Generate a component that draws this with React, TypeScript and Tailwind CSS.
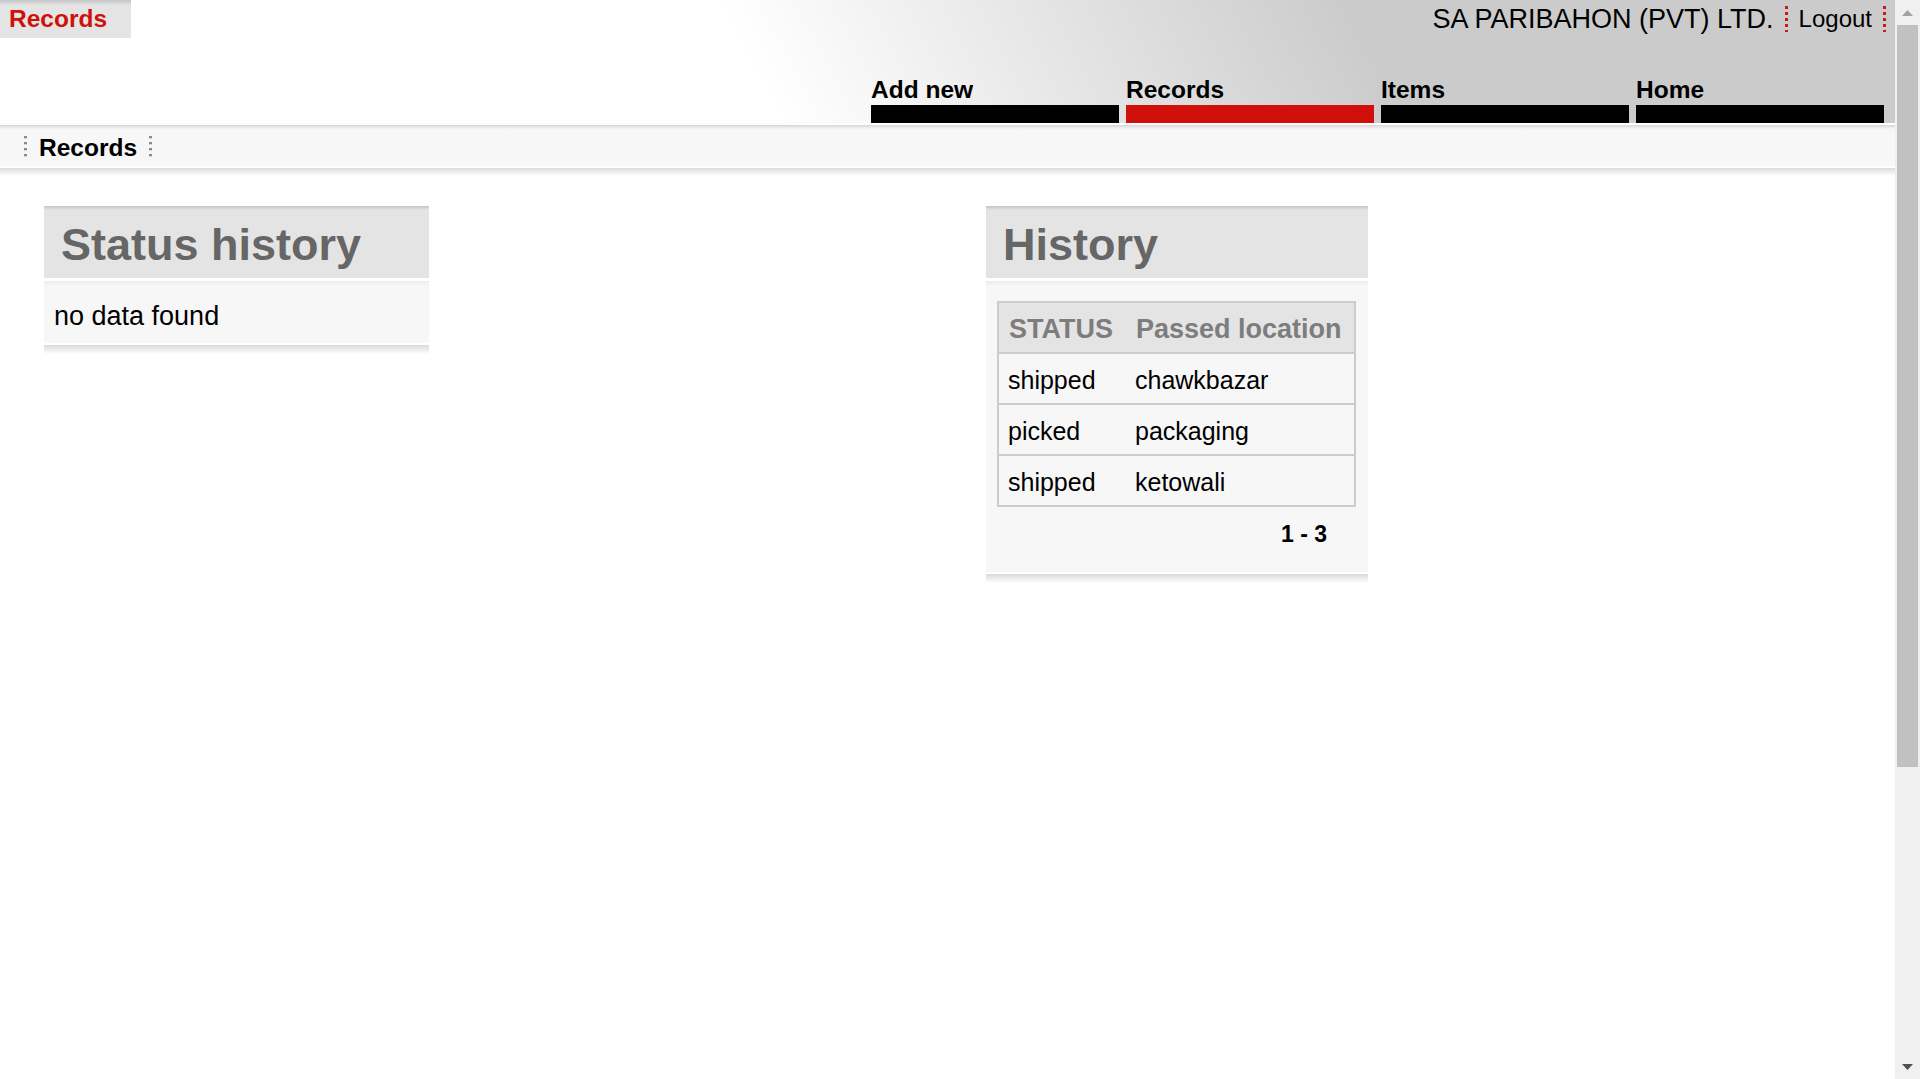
import React from 'react';

const navItems = [
  { label: 'Add new', active: false },
  { label: 'Records', active: true },
  { label: 'Items', active: false },
  { label: 'Home', active: false },
];

const rows = [
  { status: 'shipped', location: 'chawkbazar' },
  { status: 'picked', location: 'packaging' },
  { status: 'shipped', location: 'ketowali' },
];

function RedDots() {
  return <span className="block w-[3px] h-[26px] bg-[repeating-linear-gradient(#cc1a1a_0_3px,transparent_3px_6px)]" />;
}

function GreyDots() {
  return <span className="block w-[3px] h-[23px] bg-[repeating-linear-gradient(#8a8a8a_0_2px,#d4d4d4_2px_3px,transparent_3px_6px)]" />;
}

function PanelHeader({ title }: { title: string }) {
  return (
    <div className="h-[72px] pt-[14px] pl-[17px] bg-[linear-gradient(#c6c6c6,#e4e4e4_4px)]">
      <h2 className="text-[45px] leading-[50px] font-bold text-[#666666]">{title}</h2>
    </div>
  );
}

function PanelFoot() {
  return (
    <>
      <div className="h-[2px] bg-white" />
      <div className="h-[9px] bg-[linear-gradient(#dadada,#ffffff)]" />
    </>
  );
}

function Scrollbar() {
  return (
    <div className="w-[25px] h-full bg-[#f0f0f0] flex flex-col shrink-0">
      <div className="h-[25px] flex items-center justify-center">
        <svg width="11" height="6" viewBox="0 0 11 6">
          <polygon points="0,6 5.5,0 11,6" fill="#a3a3a3" />
        </svg>
      </div>
      <div className="ml-[2px] w-[21px] h-[742px] bg-[#c1c1c1]" />
      <div className="flex-1" />
      <div className="h-[25px] flex items-center justify-center">
        <svg width="11" height="6" viewBox="0 0 11 6">
          <polygon points="0,0 11,0 5.5,6" fill="#505050" />
        </svg>
      </div>
    </div>
  );
}

export default function App() {
  return (
    <div className="flex h-screen overflow-hidden bg-white text-black font-['Liberation_Sans',Arial,sans-serif]">
      <div className="flex-1 flex flex-col min-w-0">

        {/* top header */}
        <header className="h-[123px] flex flex-col justify-between bg-[linear-gradient(62deg,#ffffff_40%,#cbcbcb_72%)]">
          <div className="flex items-start justify-between">
            <div className="w-[131px] h-[38px] pl-[9px] bg-[linear-gradient(#c4c4c4,#e4e4e4_5px)]">
              <span className="text-[24.5px] leading-[38px] font-bold text-[#d0110b]">Records</span>
            </div>
            <div className="flex items-center h-[38px] gap-[11px] pr-[9px]">
              <span className="text-[27px] leading-[38px]">SA PARIBAHON (PVT) LTD.</span>
              <RedDots />
              <span className="text-[24px] leading-[38px]">Logout</span>
              <RedDots />
            </div>
          </div>
          <nav className="flex justify-end gap-[7px] pr-[11px]">
            {navItems.map((item) => (
              <div key={item.label} className="w-[248px] flex flex-col">
                <span className="text-[24.5px] leading-[28px] font-bold">{item.label}</span>
                <span className={`mt-[1px] h-[18px] ${item.active ? 'bg-[#d0110b]' : 'bg-black'}`} />
              </div>
            ))}
          </nav>
        </header>

        {/* breadcrumb */}
        <div className="h-[2px] bg-white" />
        <div className="h-[41px] pt-[4px] pl-[24px] flex items-center gap-[12px] bg-[linear-gradient(#d6d6d6,#f7f7f7_4px)]">
          <GreyDots />
          <span className="text-[24.5px] leading-[27px] font-bold">Records</span>
          <GreyDots />
        </div>
        <div className="h-[2px] bg-white" />
        <div className="h-[8px] bg-[linear-gradient(#dcdcdc,#ffffff)]" />

        {/* content */}
        <main className="grid grid-cols-[942px_auto] pl-[44px] pt-[30px] items-start">
          <section className="w-[385px] flex flex-col">
            <PanelHeader title="Status history" />
            <div className="border-t-[3px] border-white bg-[linear-gradient(#ececec,#f7f7f7_5px)] pt-[20px] pb-[12px] pl-[10px]">
              <p className="text-[27px] leading-[30px]">no data found</p>
            </div>
            <PanelFoot />
          </section>

          <section className="w-[382px] flex flex-col">
            <PanelHeader title="History" />
            <div className="border-t-[3px] border-white bg-[linear-gradient(#ececec,#f7f7f7_5px)] pt-[20px] px-[11px] pb-[25px]">
              <div className="w-[359px] border-2 border-[#cccccc]">
                <div className="flex items-center h-[51px] pt-[3px] border-b-2 border-[#cccccc] bg-[#e4e4e4] text-[27px] font-bold text-[#7d7d7d]">
                  <span className="w-[127px] pl-[10px]">STATUS</span>
                  <span className="pl-[10px]">Passed location</span>
                </div>
                {rows.map((r, i) => (
                  <div
                    key={i}
                    className={`flex items-center pt-[5px] text-[25px] bg-[#f7f7f7] ${i < rows.length - 1 ? 'h-[51px] border-b-2 border-[#cccccc]' : 'h-[49px]'}`}
                  >
                    <span className="w-[127px] pl-[9px]">{r.status}</span>
                    <span className="pl-[9px]">{r.location}</span>
                  </div>
                ))}
              </div>
              <div className="mt-[15px] pr-[30px] text-right text-[23px] leading-[25px] font-bold">1 - 3</div>
            </div>
            <PanelFoot />
          </section>
        </main>
      </div>
      <Scrollbar />
    </div>
  );
}
